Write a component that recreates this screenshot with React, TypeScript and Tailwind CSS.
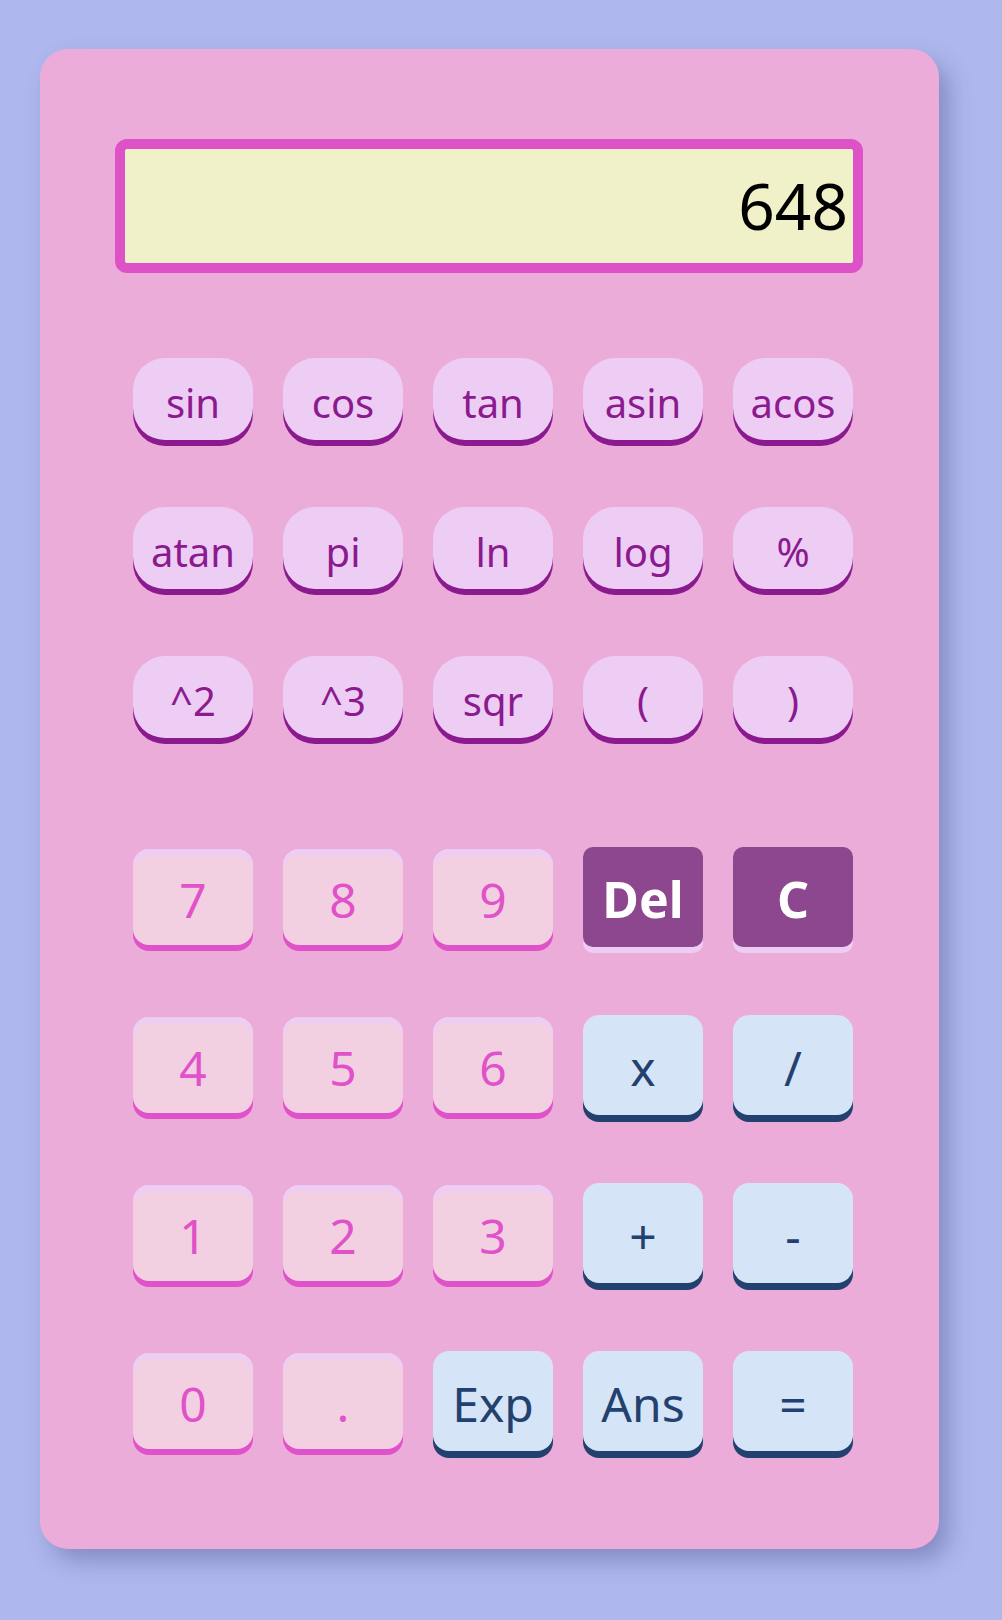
const funcKeys = ["sin", "cos", "tan", "asin", "acos", "atan", "pi", "ln", "log", "%", "^2", "^3", "sqr", "(", ")"];

type Kind = "num" | "op" | "clear";

const padKeys: { label: string; kind: Kind }[] = [
  { label: "7", kind: "num" },
  { label: "8", kind: "num" },
  { label: "9", kind: "num" },
  { label: "Del", kind: "clear" },
  { label: "C", kind: "clear" },
  { label: "4", kind: "num" },
  { label: "5", kind: "num" },
  { label: "6", kind: "num" },
  { label: "x", kind: "op" },
  { label: "/", kind: "op" },
  { label: "1", kind: "num" },
  { label: "2", kind: "num" },
  { label: "3", kind: "num" },
  { label: "+", kind: "op" },
  { label: "-", kind: "op" },
  { label: "0", kind: "num" },
  { label: ".", kind: "num" },
  { label: "Exp", kind: "op" },
  { label: "Ans", kind: "op" },
  { label: "=", kind: "op" },
];

const kindClass: Record<Kind, string> = {
  num: "h-[96px] rounded-2xl bg-[#f3d0e1] text-[#e052c9] text-[48px] pt-[5px] shadow-[inset_0_6px_0_#eecdf5,0_6px_0_#e052c9]",
  op: "h-[100px] rounded-2xl bg-[#d6e4f7] text-[#23416f] text-[48px] pt-[6px] shadow-[0_7px_0_#23416f]",
  clear: "h-[100px] rounded-[10px] bg-[#8c478f] text-white text-[50px] font-bold pt-[4px] shadow-[0_6px_0_#eecdf5]",
};

export default function App() {
  return (
    <div className="min-h-screen bg-[#aeb8ee] pt-[49px] pb-[71px] font-['Noto_Sans',sans-serif]">
      <div className="ml-[40px] w-[899px] rounded-[28px] bg-[#ecacd9] pt-[90px] pb-[98px] shadow-[10px_12px_22px_rgba(60,60,120,0.35)]">
        {/* display */}
        <div className="ml-[75px] flex h-[134px] w-[748px] items-center justify-end rounded-xl border-[10px] border-[#de52c8] bg-[#f0f1c9] pr-[5px]">
          <span className="text-[64px] leading-none text-black">648</span>
        </div>

        {/* scientific keys */}
        <div className="ml-[93px] mt-[85px] grid w-[720px] grid-cols-5 gap-x-[30px] gap-y-[67px]">
          {funcKeys.map((k) => (
            <button
              key={k}
              className="flex h-[82px] items-center justify-center rounded-[32px] bg-[#eecdf5] pt-[8px] text-[40px] leading-none text-[#8b1a8f] shadow-[0_6px_0_#8b1a8f]"
            >
              {k}
            </button>
          ))}
        </div>

        {/* number pad */}
        <div className="ml-[93px] mt-[109px] grid w-[720px] grid-cols-5 items-center gap-x-[30px] gap-y-[68px]">
          {padKeys.map((k) => (
            <button
              key={k.label}
              className={"flex items-center justify-center leading-none " + kindClass[k.kind]}
            >
              {k.label}
            </button>
          ))}
        </div>
      </div>
    </div>
  );
}
